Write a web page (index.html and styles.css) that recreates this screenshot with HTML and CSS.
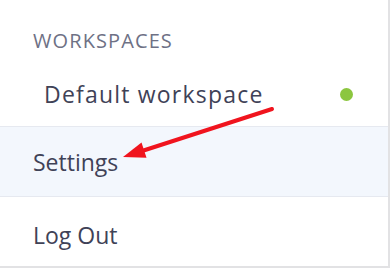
FILE: index.html
```html
<!DOCTYPE html>
<html>
<head>
<meta charset="utf-8">
<link rel="stylesheet" href="styles.css">
</head>
<body>
<div class="menu">
  <div class="section">
    <div class="label">WORKSPACES</div>
    <div class="ws-row">
      <span class="ws-name">Default workspace</span>
      <span class="dot"></span>
    </div>
  </div>
  <div class="item active">Settings</div>
  <div class="item last">Log Out</div>
  <svg class="arrow" width="392" height="268" viewBox="0 0 392 268">
    <line x1="272" y1="109" x2="142" y2="151" stroke="#f0141e" stroke-width="4" stroke-linecap="round"/>
    <polygon points="123,157 141.5,142.6 146.5,157.8" fill="#f0141e"/>
  </svg>
</div>
</body>
</html>
```
FILE: styles.css
```css
html, body {
  margin: 0;
  padding: 0;
  background: #ffffff;
}
.menu {
  position: relative;
  width: 388px;
  height: 266px;
  border-right: 2px solid #e2e2e4;
  border-bottom: 2px solid #e2e2e4;
  font-family: "Open Sans", "Noto Sans", sans-serif;
  color: #3f4257;
  display: flex;
  flex-direction: column;
}
.section {
  height: 127px;
  box-sizing: border-box;
  padding-top: 29px;
  border-bottom: 1px solid #e6e9f0;
}
.label {
  font-size: 20px;
  line-height: 24px;
  letter-spacing: 1.1px;
  color: #6e7185;
  padding-left: 33px;
}
.ws-row {
  display: flex;
  align-items: center;
  justify-content: space-between;
  margin-top: 26px;
  padding-left: 44px;
  padding-right: 35px;
  height: 30px;
}
.ws-name {
  font-size: 23px;
  line-height: 30px;
  letter-spacing: 1.2px;
}
.dot {
  width: 13px;
  height: 13px;
  border-radius: 50%;
  background: #8cc63f;
}
.item {
  box-sizing: border-box;
  height: 70px;
  padding-left: 33px;
  padding-top: 20px;
  font-size: 23px;
  line-height: 30px;
  border-bottom: 1px solid #e6e9f0;
}
.item.active {
  background: #f3f7fd;
}
.item.last {
  height: 68px;
  padding-top: 23px;
  border-bottom: none;
}
.arrow {
  position: absolute;
  left: 0;
  top: 0;
  pointer-events: none;
}
```
